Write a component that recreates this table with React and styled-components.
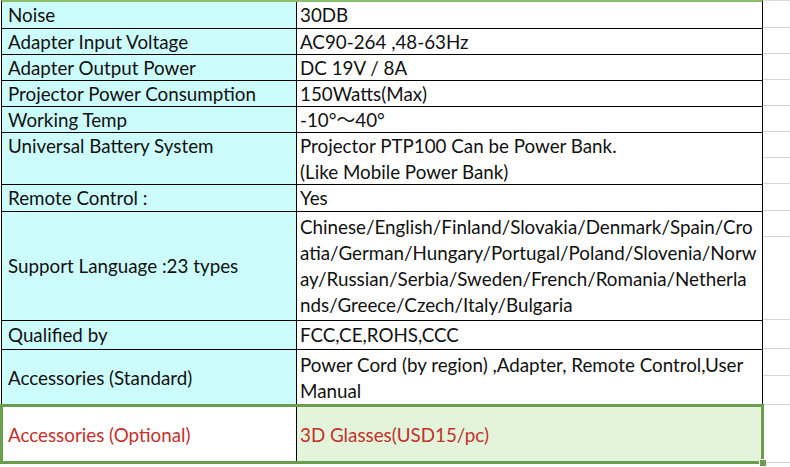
import React from 'react'
import styled, { createGlobalStyle } from 'styled-components'

const GlobalStyle = createGlobalStyle`
  body {
    margin: 0;
    background: #fff;
    font-family: 'Lato', 'Noto Sans CJK SC', 'Liberation Sans', sans-serif;
  }
`

const Sheet = styled.div`
  display: flex;
  align-items: flex-start;
  width: 790px;
  height: 467px;
  overflow: hidden;
`

const Table = styled.div`
  box-sizing: border-box;
  width: 762px;
  margin-left: 1px;
  flex-shrink: 0;
  border-top: 2px solid #8cbf6c;
  border-left: 1px solid #000;
  border-right: 1px solid #000;
`

const Row = styled.div`
  box-sizing: border-box;
  position: relative;
  display: grid;
  grid-template-columns: 295px 1fr;
  grid-template-rows: 100%;
  height: ${p => p.$h}px;
  border-bottom: 1px solid ${p => (p.$selected ? 'transparent' : '#000')};
  ${p => p.$selected && `
    &::after {
      content: '';
      position: absolute;
      top: -2px;
      left: -2px;
      right: -2px;
      bottom: -1px;
      border: 3px solid #6c9d4d;
      pointer-events: none;
    }
  `}
`

const FillHandle = styled.span`
  position: absolute;
  right: -5px;
  bottom: -4px;
  width: 6px;
  height: 6px;
  background: #6c9d4d;
  border: 1px solid #fff;
  z-index: 2;
`

const Cell = styled.div`
  box-sizing: border-box;
  min-height: 0;
  overflow: hidden;
  display: flex;
  flex-direction: column;
  justify-content: ${p => (p.$top ? 'flex-start' : 'center')};
  font-size: 18.8px;
  line-height: 26px;
  white-space: nowrap;
  color: ${p => (p.$red ? '#c4302b' : '#111')};
`

const Label = styled(Cell)`
  padding: 0 5px 0 6px;
  background: ${p => (p.$selected ? '#fff' : '#ccfcfc')};
  border-right: 1px solid #000;
`

const Value = styled(Cell)`
  padding: 0 3px 0 3px;
  background: ${p => (p.$selected ? '#e3f4da' : '#fff')};
`

const Margin = styled.div`
  flex: 1;
  border-top: 1px solid #dcdcdc;
`

const GridLine = styled.div`
  box-sizing: border-box;
  height: ${p => p.$h}px;
  border-bottom: 1px solid #d6d6d6;
`

const rows = [
  { label: 'Noise', value: ['30DB'], h: 27 },
  { label: 'Adapter Input Voltage', value: ['AC90-264 ,48-63Hz'], h: 26 },
  { label: 'Adapter Output Power', value: ['DC 19V / 8A'], h: 26 },
  { label: 'Projector Power Consumption', value: ['150Watts(Max)'], h: 26 },
  { label: 'Working Temp', value: ['-10°～40°'], h: 26 },
  {
    label: 'Universal Battery System',
    value: ['Projector PTP100 Can be Power Bank.', '(Like Mobile Power Bank)'],
    h: 52,
    top: true,
  },
  { label: 'Remote Control :', value: ['Yes'], h: 27 },
  {
    label: 'Support Language :23 types',
    value: [
      'Chinese/English/Finland/Slovakia/Denmark/Spain/Cro',
      'atia/German/Hungary/Portugal/Poland/Slovenia/Norw',
      'ay/Russian/Serbia/Sweden/French/Romania/Netherla',
      'nds/Greece/Czech/Italy/Bulgaria',
    ],
    h: 109,
  },
  { label: 'Qualified by', value: ['FCC,CE,ROHS,CCC'], h: 29 },
  {
    label: 'Accessories (Standard)',
    value: ['Power Cord (by region) ,Adapter, Remote Control,User', 'Manual'],
    h: 56,
  },
  { label: 'Accessories (Optional)', value: ['3D Glasses(USD15/pc)'], h: 58, selected: true, red: true },
]

const gridLines = [27, 26, 26, 26, 26, 26, 26, 27, 26, 83, 29, 27, 29, 58]

const App = () => (
  <>
    <GlobalStyle />
    <Sheet>
      <Table>
        {rows.map((r, i) => (
          <Row key={i} $h={r.h} $selected={r.selected}>
            <Label $top={r.top} $selected={r.selected} $red={r.red}>
              <span>{r.label}</span>
            </Label>
            <Value $top={r.top} $selected={r.selected} $red={r.red}>
              {r.value.map((line, j) => <span key={j}>{line}</span>)}
            </Value>
            {r.selected && <FillHandle />}
          </Row>
        ))}
      </Table>
      <Margin>
        {gridLines.map((h, i) => <GridLine key={i} $h={h} />)}
      </Margin>
    </Sheet>
  </>
)

export default App
